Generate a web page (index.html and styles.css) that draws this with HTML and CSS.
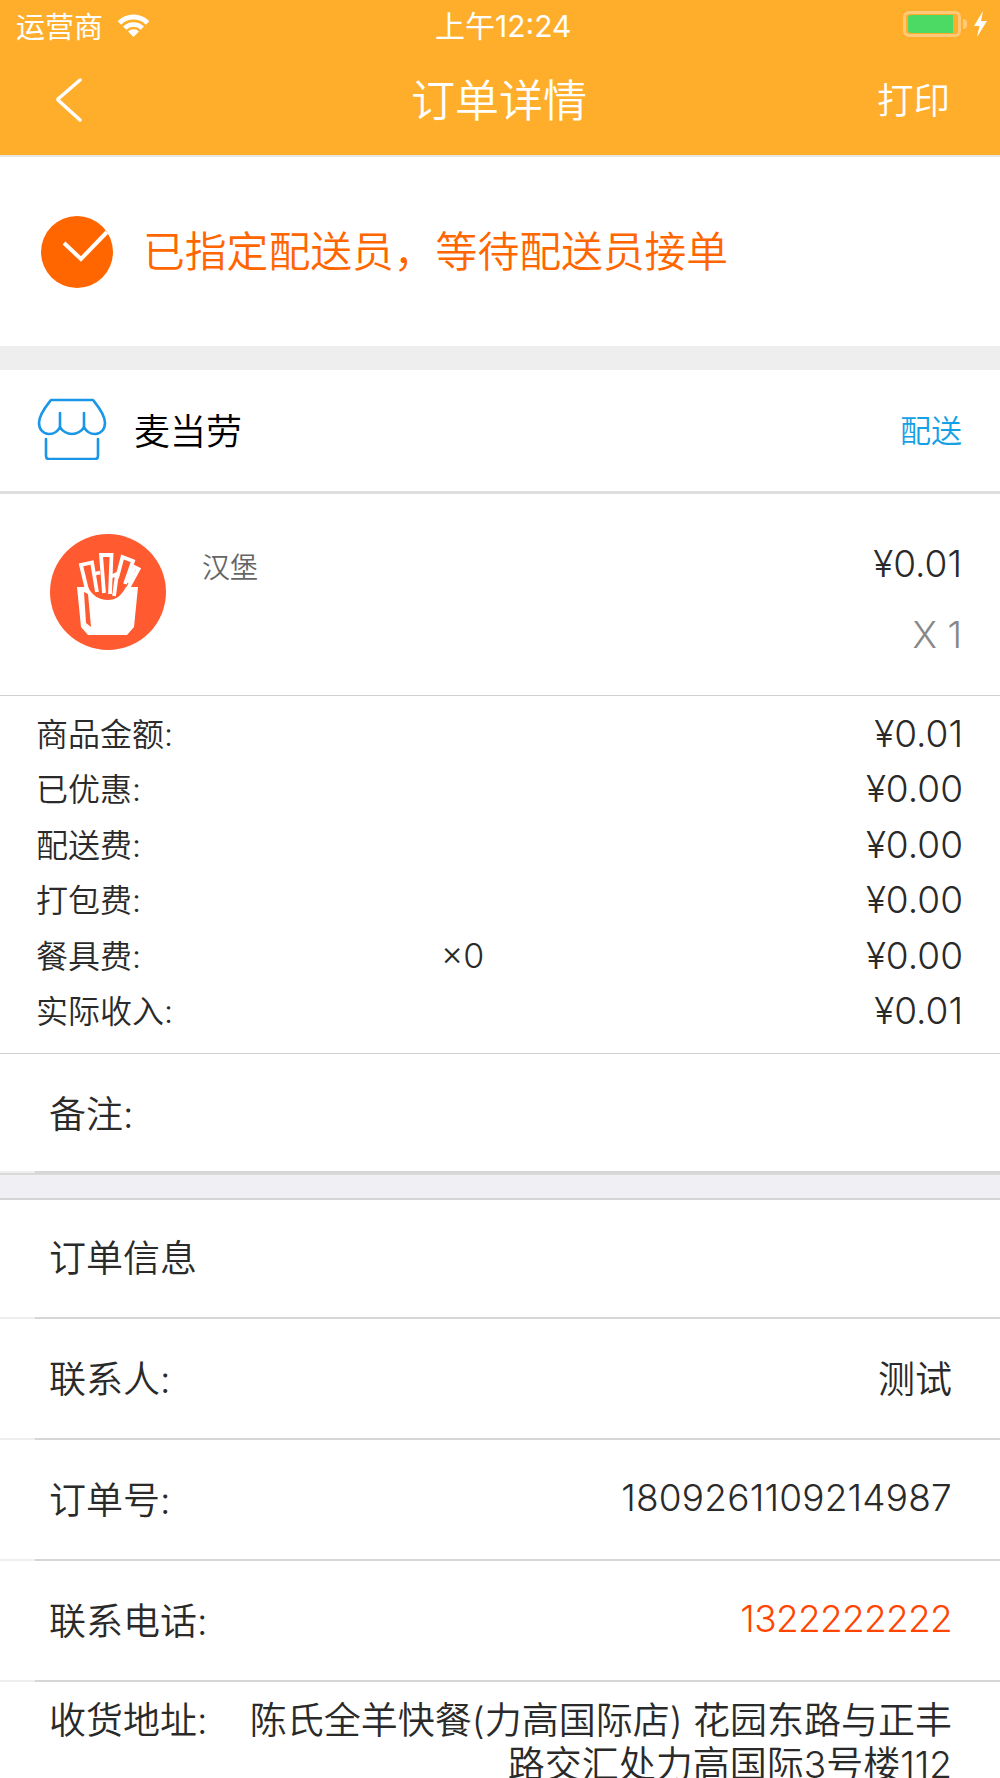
FILE: index.html
```html
<!DOCTYPE html>
<html lang="zh">
<head>
<meta charset="utf-8">
<title>订单详情</title>
<link rel="stylesheet" href="styles.css">
</head>
<body>
<div class="page">
  <header class="header">
    <div class="statusbar">
      <div class="status-left">
        <span>运营商</span>
        <svg class="wifi" width="33" height="24" viewBox="0 0 33 24"><g fill="none" stroke="#fff"><path d="M2.400 9.900A20 20 0 0 1 30.600 9.900" stroke-width="5"/><path d="M7.660 15.160A12.500 12.500 0 0 1 25.340 15.160" stroke-width="4.500"/></g><path d="M16.500 24 11 18.500A7.800 7.800 0 0 1 22 18.500Z" fill="#fff"/></svg>
      </div>
      <div class="status-time">上午12:24</div>
      <div class="status-right">
        <div class="battery"><div class="battery-fill"></div></div>
        <div class="battery-cap"></div>
        <svg width="15" height="26" viewBox="0 0 15 26"><path d="M10 0 1 15h5.500L4 26l10-16H8z" fill="#fff"/></svg>
      </div>
    </div>
    <div class="navbar">
      <svg class="back" width="30" height="44" viewBox="0 0 30 44"><path d="M26 2 4 21l0 1 22 20" fill="none" stroke="#fff" stroke-width="3.500" stroke-linejoin="round" stroke-linecap="round"/></svg>
      <div class="nav-title">订单详情</div>
      <div class="nav-action">打印</div>
    </div>
  </header>

  <section class="banner">
    <svg width="72" height="72" viewBox="0 0 72 72"><circle cx="36" cy="36" r="36" fill="#ff6600"/><path d="M23 27 40 43 66 16" fill="none" stroke="#fff" stroke-width="4"/></svg>
    <div class="banner-text">已指定配送员，等待配送员接单</div>
  </section>

  <div class="gap"></div>

  <section class="store">
    <svg width="70" height="62" viewBox="0 0 70 62"><g fill="none" stroke="#1a96e8" stroke-width="2.600" stroke-linecap="round" stroke-linejoin="round"><path d="M14 2h42c4 5 12 14 12 23 0 6-4 11-10 11-5 0-9-3-11-7-2 4-7 7-12 7s-10-3-12-7c-2 4-6 7-11 7-6 0-10-5-10-11C2 16 10 7 14 2z"/><path d="M23 15v14M47 15v14"/><path d="M9 41v17c0 2 1 3 3 3h46c2 0 3-1 3-3V41"/></g></svg>
    <div class="store-name">麦当劳</div>
    <div class="store-type">配送</div>
  </section>

  <section class="item">
    <svg class="item-icon" width="116" height="116" viewBox="0 0 116 116"><circle cx="58" cy="58" r="58" fill="#ff5a30"/><g fill="none" stroke="#fff" stroke-width="3.800" stroke-linejoin="miter"><path d="M37 56 31 31 42 28.500 47 58"/><path d="M44 40 50 38.500"/><path d="M54 59 51 21 61.500 21 60 60"/><path d="M60 43 67 40 64 62"/><path d="M67 44 72.500 23 83 27 75 50"/><path d="M78 49 84.500 33 88.500 35 76 58"/></g><path d="M27 53H38C42 62 50 66 58 66 66 66 71 62 76 53H88L84 93 77 101H38L31 93Z" fill="#fff"/><path d="M34 58 38 60 41 93 36 89Z" fill="#ff5a30"/></svg>
    <div class="item-name">汉堡</div>
    <div class="item-side">
      <div class="item-price">¥0.01</div>
      <div class="item-qty">X 1</div>
    </div>
  </section>

  <section class="summary">
    <div class="sum-row"><span class="sum-label">商品金额:</span><span class="sum-value">¥0.01</span></div>
    <div class="sum-row"><span class="sum-label">已优惠:</span><span class="sum-value">¥0.00</span></div>
    <div class="sum-row"><span class="sum-label">配送费:</span><span class="sum-value">¥0.00</span></div>
    <div class="sum-row"><span class="sum-label">打包费:</span><span class="sum-value">¥0.00</span></div>
    <div class="sum-row"><span class="sum-label">餐具费:</span><span class="sum-mid">×0</span><span class="sum-value">¥0.00</span></div>
    <div class="sum-row"><span class="sum-label">实际收入:</span><span class="sum-value">¥0.01</span></div>
  </section>

  <section class="row note-row"><span>备注:</span></section>
  <div class="gap gap-lined"></div>
  <section class="row info-row"><span>订单信息</span></section>
  <section class="row"><span>联系人:</span><span>测试</span></section>
  <section class="row"><span>订单号:</span><span class="order-no">1809261109214987</span></section>
  <section class="row"><span>联系电话:</span><span class="phone">1322222222</span></section>
  <section class="address">
    <span class="address-label">收货地址:</span>
    <span class="address-text">陈氏全羊快餐(力高国际店) 花园东路与正丰路交汇处力高国际3号楼112</span>
  </section>
</div>
</body>
</html>
```

FILE: styles.css
```css
* { box-sizing: border-box; }
html, body { margin: 0; padding: 0; background: #fff; }
body { font-family: Inter, "Noto Sans CJK SC", "Noto Sans", sans-serif; color: #2a2a2a; font-weight: 350; }
.page { width: 1000px; height: 1778px; overflow: hidden; }

.header { height: 157px; background: #ffae2b; border-bottom: 2px solid #e6e6e6; color: #fff; }
.statusbar { height: 50px; padding: 0 12px 0 16px; display: flex; align-items: center; justify-content: space-between; position: relative; font-size: 29px; font-weight: 400; }
.status-left { display: flex; align-items: center; gap: 14px; }
.wifi { margin-top: -1px; }
.status-time { position: absolute; left: 435px; top: 6px; font-size: 30px; line-height: 40px; }
.status-right { display: flex; align-items: center; margin-top: -2px; }
.battery { width: 58px; height: 26px; border: 3px solid #ffc97a; border-radius: 6px; padding: 1px 2px; }
.battery-fill { width: 45px; height: 18px; background: #4cd964; border-radius: 3px 0 0 3px; }
.battery-cap { width: 4px; height: 10px; background: #ffc97a; border-radius: 0 4px 4px 0; margin: 0 6px 0 2px; }

.navbar { height: 104px; padding: 0 50px 0 54px; display: flex; align-items: center; justify-content: space-between; position: relative; }
.back { margin-top: -4px; }
.nav-title { position: absolute; left: -1px; right: 1px; top: 23px; text-align: center; font-size: 44px; line-height: 56px; }
.nav-action { font-size: 36.500px; line-height: 50px; margin-top: -3px; }

.banner { height: 189px; padding: 0 0 0 41px; display: flex; align-items: center; gap: 30px; }
.banner-text { font-size: 41.800px; color: #ff6600; margin-bottom: 5px; }

.gap { height: 24px; background: #eeeeee; }
.gap-lined { height: 27px; background: #efeff4; border-top: 2px solid #d9d9d9; border-bottom: 2px solid #d4d4d4; }

.store { height: 124px; padding: 0 38px 4px 37px; display: flex; align-items: center; border-bottom: 3px solid #dedede; }
.store-name { font-size: 36px; color: #000; margin-left: 27px; }
.store-type { font-size: 31px; color: #14a0e6; margin-left: auto; }

.item { height: 202px; padding: 40px 38px 0 50px; display: flex; align-items: flex-start; border-bottom: 1px solid #d0d0d0; }
.item-name { font-size: 28px; color: #666; margin: 14px 0 0 36px; line-height: 40px; }
.item-side { margin-left: auto; text-align: right; }
.item-price { font-size: 37px; line-height: 48px; margin-top: 6px; }
.item-qty { font-size: 37px; line-height: 48px; margin-top: 23px; color: #888; }

.summary { height: 358px; padding-top: 8px; border-bottom: 1px solid #d0d0d0; }
.sum-row { height: 55.500px; padding: 0 37px; display: flex; align-items: center; position: relative; }
.sum-label { font-size: 32px; margin-left: -1px; }
.sum-value { font-size: 37px; margin: 3px 0 0 auto; }
.sum-mid { position: absolute; left: 441px; font-size: 34px; margin-top: 3px; }

.row { height: 121px; padding: 0 48px 3px 49px; display: flex; align-items: center; justify-content: space-between; font-size: 37px; border-bottom: 2px solid #d9d9d9; border-image: linear-gradient(to right, #eeeeee 36px, #d6d6d6 36px) 1; }
.note-row { height: 119px; padding-bottom: 2px; }
.info-row { height: 118.500px; padding-bottom: 4px; }
.order-no { letter-spacing: 0.200px; }
.phone { color: #ff4500; letter-spacing: -0.700px; }

.address { display: flex; justify-content: space-between; padding: 17px 48px 0 49px; font-size: 37px; line-height: 44px; }
.address-label { flex: none; }
.address-text { width: 708px; text-align: right; }
```
